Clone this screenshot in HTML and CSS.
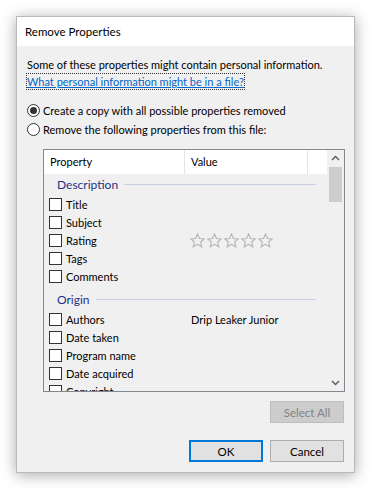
FILE: index.html
```html
<!DOCTYPE html>
<html lang="en">
<head>
  <meta charset="UTF-8">
  <meta name="viewport" content="width=device-width, initial-scale=1.0">
  <title>Remove Properties</title>
  <link rel="stylesheet" href="styles.css">
</head>
<body>
  <div class="dialog">
    <div class="titlebar">Remove Properties</div>

    <div class="content">
      <p class="intro">Some of these properties might contain personal information.</p>
      <a class="help-link" href="#">What personal information might be in a file?</a>

      <div class="options">
        <label class="radio-row">
          <span class="radio checked"></span>
          Create a copy with all possible properties removed
        </label>
        <label class="radio-row">
          <span class="radio"></span>
          Remove the following properties from this file:
        </label>
      </div>

      <div class="listbox">
        <div class="list-main">
          <div class="list-header">
            <div class="col col-prop">Property</div>
            <div class="col col-value">Value</div>
            <div class="col col-rest"></div>
          </div>

          <div class="list-body">
            <div class="group"><span>Description</span></div>
            <div class="item"><span class="check"></span><span class="name">Title</span><span class="value"></span></div>
            <div class="item"><span class="check"></span><span class="name">Subject</span><span class="value"></span></div>
            <div class="item">
              <span class="check"></span><span class="name">Rating</span>
              <span class="value stars">
                <svg viewBox="0 0 14 14"><polygon points="7,1 8.8,5.2 13.3,5.5 9.9,8.4 11,12.9 7,10.5 3,12.9 4.1,8.4 0.7,5.5 5.2,5.2"/></svg>
                <svg viewBox="0 0 14 14"><polygon points="7,1 8.8,5.2 13.3,5.5 9.9,8.4 11,12.9 7,10.5 3,12.9 4.1,8.4 0.7,5.5 5.2,5.2"/></svg>
                <svg viewBox="0 0 14 14"><polygon points="7,1 8.8,5.2 13.3,5.5 9.9,8.4 11,12.9 7,10.5 3,12.9 4.1,8.4 0.7,5.5 5.2,5.2"/></svg>
                <svg viewBox="0 0 14 14"><polygon points="7,1 8.8,5.2 13.3,5.5 9.9,8.4 11,12.9 7,10.5 3,12.9 4.1,8.4 0.7,5.5 5.2,5.2"/></svg>
                <svg viewBox="0 0 14 14"><polygon points="7,1 8.8,5.2 13.3,5.5 9.9,8.4 11,12.9 7,10.5 3,12.9 4.1,8.4 0.7,5.5 5.2,5.2"/></svg>
              </span>
            </div>
            <div class="item"><span class="check"></span><span class="name">Tags</span><span class="value"></span></div>
            <div class="item"><span class="check"></span><span class="name">Comments</span><span class="value"></span></div>

            <div class="group next"><span>Origin</span></div>
            <div class="item"><span class="check"></span><span class="name">Authors</span><span class="value">Drip Leaker Junior</span></div>
            <div class="item"><span class="check"></span><span class="name">Date taken</span><span class="value"></span></div>
            <div class="item"><span class="check"></span><span class="name">Program name</span><span class="value"></span></div>
            <div class="item"><span class="check"></span><span class="name">Date acquired</span><span class="value"></span></div>
            <div class="item"><span class="check"></span><span class="name">Copyright</span><span class="value"></span></div>
          </div>
        </div>

        <div class="scrollbar">
          <div class="arrow">
            <svg viewBox="0 0 17 17"><polyline points="5,10 8.5,6.5 12,10"/></svg>
          </div>
          <div class="track"><div class="thumb"></div></div>
          <div class="arrow">
            <svg viewBox="0 0 17 17"><polyline points="5,7 8.5,10.5 12,7"/></svg>
          </div>
        </div>
      </div>

      <div class="select-row">
        <button class="btn" disabled>Select All</button>
      </div>

      <div class="button-row">
        <button class="btn default">OK</button>
        <button class="btn">Cancel</button>
      </div>
    </div>
  </div>
</body>
</html>
```

FILE: styles.css
```css
/* Page */
body {
  margin: 0;
  padding: 16px;
  background-color: #ffffff;
  font-family: 'Lato', 'Noto Sans', sans-serif;
  font-size: 11px;
  color: #000;
}

.dialog {
  width: 337px;
  border: 1px solid #b9b9b9;
  background-color: #f0f0f0;
  box-shadow: 0 2px 14px rgba(0, 0, 0, 0.35);
}

.titlebar {
  height: 29px;
  line-height: 29px;
  padding-left: 8px;
  font-size: 11.5px;
  background-color: #ffffff;
}

.content {
  padding: 10px 10px 10px 10px;
}

.intro {
  margin: 0;
  height: 17px;
  line-height: 17px;
  white-space: nowrap;
}

.help-link {
  display: block;
  width: fit-content;
  height: 15px;
  line-height: 15px;
  margin-top: 1px;
  color: #0066cc;
  text-decoration: underline;
  outline: 1px dotted #333;
}

/* Radio options */
.options {
  margin-top: 12px;
}

.radio-row {
  display: flex;
  align-items: center;
  height: 19px;
}

.radio {
  width: 11px;
  height: 11px;
  border: 1px solid #333;
  border-radius: 50%;
  background-color: #fff;
  margin-right: 3px;
  display: flex;
  align-items: center;
  justify-content: center;
}

.radio.checked::after {
  content: '';
  width: 7px;
  height: 7px;
  border-radius: 50%;
  background-color: #333;
}

/* Property list */
.listbox {
  margin: 10px 0 0 16px;
  width: 300px;
  height: 241px;
  border: 1px solid #828790;
  display: flex;
}

.list-main {
  flex: 1;
  overflow: hidden;
}

.list-header {
  display: flex;
  height: 24px;
  background-color: #fff;
}

.col {
  line-height: 24px;
  padding-left: 6px;
  box-sizing: border-box;
}

.col-prop {
  width: 141px;
  border-right: 1px solid #e5e5e5;
}

.col-value {
  width: 123px;
  border-right: 1px solid #e5e5e5;
}

.col-rest {
  flex: 1;
}

.group {
  display: flex;
  align-items: center;
  height: 21px;
  padding: 0 11px 0 13px;
  color: #1e3287;
  font-size: 12px;
}

.group::after {
  content: '';
  flex: 1;
  height: 1px;
  margin-left: 6px;
  background-color: #c7d0e2;
}

.group.next {
  margin-top: 4px;
}

.item {
  display: flex;
  align-items: center;
  height: 18px;
}

.check {
  width: 11px;
  height: 11px;
  border: 1px solid #333;
  background-color: #fff;
  margin-left: 5px;
  margin-right: 4px;
}

.name {
  width: 119px;
}

.value {
  padding-left: 6px;
}

.stars {
  display: flex;
  gap: 2px;
  padding-left: 5px;
}

.stars svg {
  width: 15px;
  height: 15px;
  fill: none;
  stroke: #b4b4b4;
  stroke-width: 1;
}

/* Scrollbar */
.scrollbar {
  width: 17px;
  display: flex;
  flex-direction: column;
  background-color: #f0f0f0;
}

.arrow {
  height: 17px;
}

.arrow svg {
  width: 17px;
  height: 17px;
  fill: none;
  stroke: #606060;
  stroke-width: 1.5;
}

.track {
  flex: 1;
  padding: 0 2px;
}

.thumb {
  height: 35px;
  background-color: #cdcdcd;
}

/* Buttons */
.select-row,
.button-row {
  display: flex;
  justify-content: flex-end;
  gap: 7px;
}

.select-row {
  margin-top: 9px;
}

.button-row {
  margin-top: 17px;
}

.btn {
  width: 74px;
  height: 22px;
  padding: 0;
  font-family: inherit;
  font-size: 11.5px;
  color: #000;
  background-color: #e1e1e1;
  border: 1px solid #adadad;
}

.btn:disabled {
  background-color: #cccccc;
  border-color: #bfbfbf;
  color: #838383;
}

.btn.default {
  border: 2px solid #0078d7;
}
```
